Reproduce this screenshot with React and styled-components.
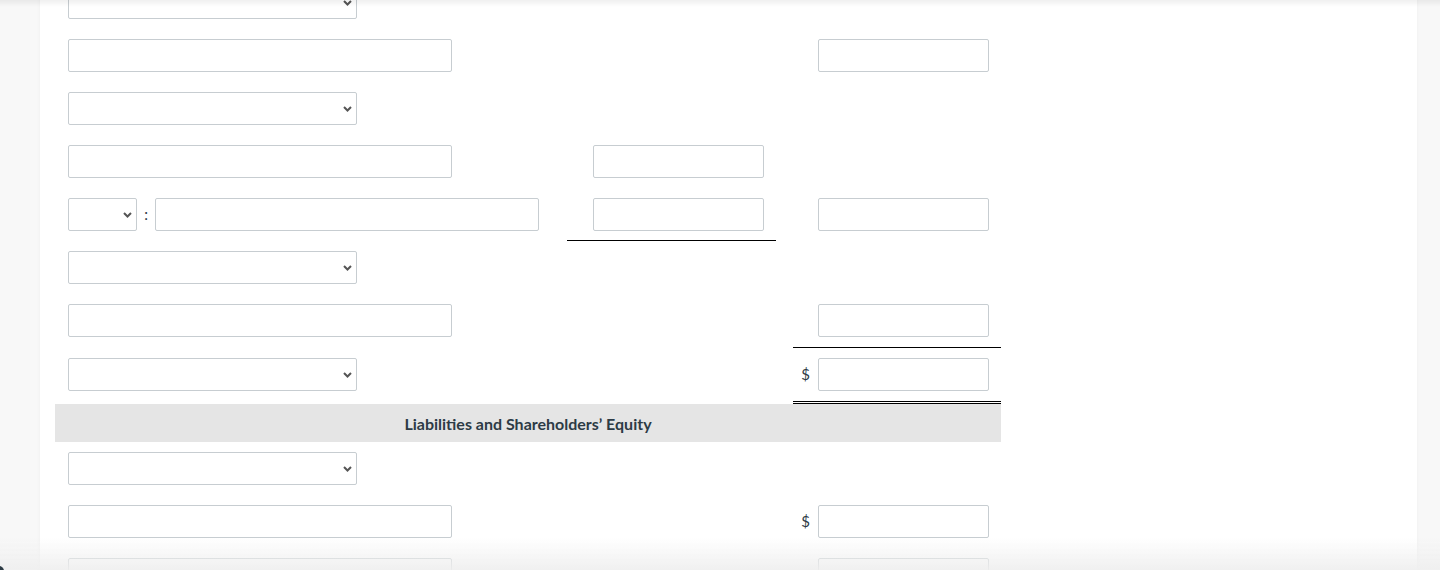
import React from "react";
import styled, { createGlobalStyle } from "styled-components";

const GlobalStyle = createGlobalStyle`
  html, body {
    margin: 0;
    padding: 0;
    background: #f8f8f8;
    overflow: hidden;
  }
  body {
    font-family: Lato, "Open Sans", sans-serif;
    color: #2d3b45;
  }
`;

// white sheet the worksheet sits on (scrolled, so it starts above the viewport)
const Sheet = styled.main`
  margin: -24px 0 0 40px;
  width: 1377px;
  min-height: 700px;
  background: #ffffff;
  box-shadow: 0 0 4px rgba(0, 0, 0, 0.04);
`;

const Statement = styled.div`
  margin-left: 15px;
  width: 946px;
`;

const Row = styled.div`
  display: grid;
  grid-template-columns: 512px 209px 17px 208px;
`;

const rules = {
  sub: "padding-bottom: 9px; border-bottom: 1px solid #000;",
  single: "border-bottom: 1px solid #000;",
  double: "border-bottom: 3px double #000;",
};

const Cell = styled.div`
  display: flex;
  align-items: flex-start;
  box-sizing: border-box;
  padding: 10px 0;
  padding-left: ${({ $indent }) => $indent || 0}px;
  ${({ $rule }) => rules[$rule] || ""}
`;

const Field = styled.input`
  box-sizing: border-box;
  width: ${({ $w }) => $w || 384}px;
  height: 33px;
  margin: 0;
  padding: 0 6px;
  border: 1px solid #c7cdd1;
  border-radius: 2px;
  background: #fff;
  font: 15px Lato, sans-serif;
  outline: none;
`;

const SelectWrap = styled.div`
  position: relative;
  width: ${({ $w }) => $w}px;
  height: 33px;
`;

const Select = styled.select`
  appearance: none;
  box-sizing: border-box;
  width: 100%;
  height: 33px;
  margin: 0;
  border: 1px solid #c7cdd1;
  border-radius: 2px;
  background: #fff;
  font: 15px Lato, sans-serif;
`;

const Chevron = styled.svg`
  position: absolute;
  right: 5px;
  top: 14px;
  pointer-events: none;
`;

const Colon = styled.span`
  width: 18px;
  line-height: 33px;
  text-align: center;
  font-size: 15px;
  color: #2d3b45;
`;

const Currency = styled.span`
  width: 25px;
  box-sizing: border-box;
  padding-right: 8px;
  line-height: 33px;
  text-align: right;
  font-size: 15px;
  color: #2d3b45;
`;

const SectionHead = styled.div`
  height: 38px;
  background: #e5e5e5;
  display: flex;
  align-items: center;
  justify-content: center;
  font-size: 16px;
  font-weight: 700;
  color: #2d3b45;
`;

const TopShade = styled.div`
  position: fixed;
  top: 0;
  left: 0;
  right: 0;
  height: 7px;
  background: linear-gradient(rgba(0, 0, 0, 0.06), rgba(0, 0, 0, 0));
  pointer-events: none;
`;

const BottomShade = styled.div`
  position: fixed;
  left: 0;
  right: 0;
  bottom: 0;
  height: 32px;
  background: linear-gradient(rgba(240, 240, 240, 0), rgba(238, 238, 238, 0.9));
  pointer-events: none;
`;

const CornerMark = styled.div`
  position: fixed;
  left: -6px;
  bottom: -6px;
  width: 10px;
  height: 10px;
  border-radius: 50%;
  background: #2d3b45;
`;

function Dropdown({ width }) {
  return (
    <SelectWrap $w={width}>
      <Select defaultValue="">
        <option value="" />
      </Select>
      <Chevron width="9" height="6" viewBox="0 0 9 6">
        <path d="M1 1l3.5 3.5L8 1" fill="none" stroke="#555" strokeWidth="2" />
      </Chevron>
    </SelectWrap>
  );
}

const rows = [
  { left: "select" },
  { left: "input", right: true },
  { left: "select" },
  { left: "input", mid: true },
  { left: "pair", mid: true, midRule: "sub", right: true },
  { left: "select" },
  { left: "input", right: true, rightRule: "single" },
  { left: "select", right: true, dollar: true, rightRule: "double" },
  { head: "Liabilities and Shareholders’ Equity" },
  { left: "select" },
  { left: "input", right: true, dollar: true },
  { left: "input", right: true },
  { left: "select" },
];

function LineItem({ row }) {
  return (
    <Row>
      <Cell $indent={13}>
        {row.left === "select" && <Dropdown width={289} />}
        {row.left === "input" && <Field />}
        {row.left === "pair" && (
          <>
            <Dropdown width={69} />
            <Colon>:</Colon>
            <Field />
          </>
        )}
      </Cell>
      <Cell $indent={26} $rule={row.midRule}>
        {row.mid && <Field $w={171} />}
      </Cell>
      <Cell />
      <Cell $rule={row.rightRule}>
        {row.right && (
          <>
            <Currency>{row.dollar ? "$" : ""}</Currency>
            <Field $w={171} />
          </>
        )}
      </Cell>
    </Row>
  );
}

export default function App() {
  return (
    <>
      <GlobalStyle />
      <Sheet>
        <Statement>
          {rows.map((row, i) =>
            row.head ? (
              <SectionHead key={i}>{row.head}</SectionHead>
            ) : (
              <LineItem key={i} row={row} />
            )
          )}
        </Statement>
      </Sheet>
      <TopShade />
      <BottomShade />
      <CornerMark />
    </>
  );
}
